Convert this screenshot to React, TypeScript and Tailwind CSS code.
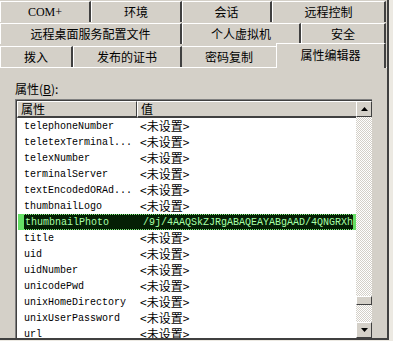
import React from 'react'

const cjk = { fontFamily: '"Noto Sans CJK SC", "Liberation Sans", sans-serif' }
const mono = { fontFamily: '"Liberation Mono", "DejaVu Sans Mono", monospace' }

const rows = [
  'telephoneNumber',
  'teletexTerminal...',
  'telexNumber',
  'terminalServer',
  'textEncodedORAd...',
  'thumbnailLogo',
  'thumbnailPhoto',
  'title',
  'uid',
  'uidNumber',
  'unicodePwd',
  'unixHomeDirectory',
  'unixUserPassword',
  'url'
]

function Tab({ label, w, serif }: { label: string; w: string; serif?: boolean }) {
  return (
    <div
      className={`${w} h-[21px] shrink-0 flex items-center justify-center border-t border-l border-white border-r-2 border-r-[#404040] text-[12px] text-black leading-none`}
      style={serif ? { fontFamily: '"Liberation Serif", serif' } : cjk}
    >
      {label}
    </div>
  )
}

function Arrow({ down }: { down?: boolean }) {
  return (
    <div className="h-[16px] w-[16px] bg-[#d4d0c8] border-t border-l border-white border-r border-b border-r-[#404040] border-b-[#404040] flex items-center justify-center">
      <svg width="7" height="4" viewBox="0 0 7 4">
        {down ? <polygon points="0,0 7,0 3.5,4" fill="#000" /> : <polygon points="0,4 7,4 3.5,0" fill="#000" />}
      </svg>
    </div>
  )
}

export default function App() {
  return (
    <div className="w-[393px] h-[341px] bg-[#ece9e2] overflow-hidden">
      <div className="w-[389px] h-[340px] bg-[#d4d0c8] border-r-2 border-b-2 border-[#404040] flex flex-col overflow-hidden">
        {/* tab rows */}
        <div className="pt-px flex flex-col gap-px">
          <div className="flex">
            <Tab label="COM+" w="w-[91px]" serif />
            <Tab label="环境" w="w-[91px]" />
            <Tab label="会话" w="w-[90px]" />
            <Tab label="远程控制" w="w-[114px]" />
          </div>
          <div className="flex">
            <Tab label="远程桌面服务配置文件" w="w-[182px]" />
            <Tab label="个人虚拟机" w="w-[119px]" />
            <Tab label="安全" w="w-[85px]" />
          </div>
          <div className="flex items-end h-[22px]">
            <Tab label="拨入" w="w-[73px]" />
            <Tab label="发布的证书" w="w-[109px]" />
            <div
              className="w-[94px] h-[21px] shrink-0 flex items-center justify-center border-t border-white text-[12px] leading-none"
              style={cjk}
            >
              密码复制
            </div>
            <div
              className="relative z-10 w-[110px] h-[25px] -mb-px shrink-0 flex items-center justify-center bg-[#d4d0c8] border-t border-l border-white border-r-2 border-r-[#404040] text-[12px] leading-none pb-[3px]"
              style={cjk}
            >
              属性编辑器
            </div>
          </div>
        </div>

        {/* panel */}
        <div className="flex-1 border-t border-white pt-[14px] flex flex-col min-h-0">
          <div className="pl-[15px] h-[14px] text-[12px] leading-[14px] text-black" style={cjk}>
            属性(<span className="underline">B</span>):
          </div>
          <div className="mt-[3px] ml-[15px] w-[357px] flex-1 min-h-0 border-t border-l border-[#808080] bg-white">
            <div className="h-full border-t border-l border-[#404040] flex overflow-hidden">
              <div className="flex-1 flex flex-col">
                {/* header */}
                <div className="flex h-[17px] shrink-0 text-[12px] leading-none" style={cjk}>
                  <div className="w-[120px] bg-[#d4d0c8] border-t border-l border-white border-r border-r-[#404040] border-b-2 border-b-[#404040] flex items-center pl-[3px]">
                    属性
                  </div>
                  <div className="flex-1 bg-[#d4d0c8] border-t border-l border-white border-b-2 border-b-[#404040] flex items-center pl-[3px]">
                    值
                  </div>
                </div>
                {rows.map((name) =>
                  name === 'thumbnailPhoto' ? (
                    <div key={name} className="h-[16px] shrink-0 flex items-stretch ml-px">
                      <div className="w-[6px] bg-[#66e066]" />
                      <div className="flex-1 flex items-center bg-[#051f05] border-y border-dotted border-[#7cf07c] text-[#a8ffa8] text-[10px]" style={mono}>
                        <div className="w-[113px] pl-[1px] whitespace-nowrap">{name}</div>
                        <div className="pl-[6px] whitespace-nowrap overflow-hidden">/9j/4AAQSkZJRgABAQEAYABgAAD/4QNGRXh</div>
                      </div>
                      <div className="w-[3px] bg-[#66e066]" />
                    </div>
                  ) : (
                    <div key={name} className="h-[16px] shrink-0 flex items-center text-black">
                      <div className="w-[120px] pl-[7px] text-[10px] whitespace-nowrap" style={mono}>
                        {name}
                      </div>
                      <div className="pl-[3px] text-[12px] leading-none whitespace-nowrap" style={cjk}>
                        &lt;未设置&gt;
                      </div>
                    </div>
                  )
                )}
              </div>
              {/* scrollbar */}
              <div className="w-[16px] shrink-0 flex flex-col bg-[repeating-conic-gradient(#d4d0c8_0%_25%,#ffffff_0%_50%)] bg-[length:2px_2px]">
                <Arrow />
                <div className="mt-[179px] h-[9px] bg-[#d4d0c8] border-t border-l border-white border-r border-b border-r-[#404040] border-b-[#404040]" />
                <div className="mt-auto">
                  <Arrow down />
                </div>
              </div>
            </div>
          </div>
        </div>
      </div>
    </div>
  )
}
